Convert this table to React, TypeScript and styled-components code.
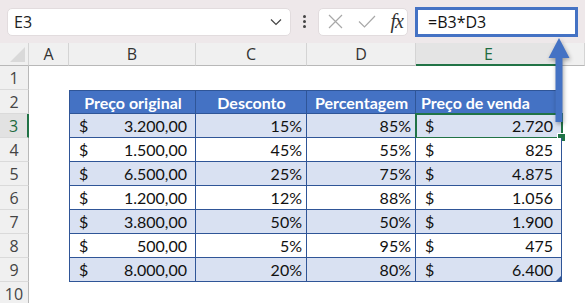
import styled, { createGlobalStyle } from "styled-components";

const GlobalStyle = createGlobalStyle`
  html, body {
    margin: 0;
    padding: 0;
    background: #ffffff;
    overflow: hidden;
  }
  * { box-sizing: border-box; }
`;

const Page = styled.div`
  width: 585px;
  height: 303px;
  position: relative;
  overflow: hidden;
  font-family: "Open Sans", "Noto Sans", sans-serif;
`;

const TopBar = styled.div`
  height: 43px;
  background: #eee8ea;
  display: flex;
  align-items: center;
  padding: 0 7px;
`;

const NameBox = styled.div`
  width: 284px;
  height: 28px;
  background: #fff;
  border: 1px solid #e2dcde;
  border-radius: 5px;
  display: flex;
  align-items: center;
  justify-content: space-between;
  padding: 0 8px 0 6px;
  font-size: 16px;
  color: #222;
`;

const Dots = styled.div`
  width: 27px;
  display: flex;
  flex-direction: column;
  align-items: center;
  gap: 2px;

  span {
    width: 3px;
    height: 3px;
    background: #444;
    border-radius: 50%;
  }
`;

const FxButtons = styled.div`
  width: 90px;
  height: 28px;
  background: #fff;
  border: 1px solid #e2dcde;
  border-radius: 5px;
  display: flex;
  align-items: center;
  justify-content: space-between;
  padding: 0 4px 0 9px;
`;

const Fx = styled.span`
  font-family: "Liberation Serif", serif;
  font-style: italic;
  font-size: 20px;
  color: #333;
  letter-spacing: -1px;
`;

const FormulaInput = styled.div`
  flex: 1;
  margin-left: 7px;
  height: 30px;
  border: 3px solid #4472c4;
  background: #fff;
  display: flex;
  align-items: center;
  padding-left: 10px;
  font-size: 16px;
  color: #111;
`;

const Sheet = styled.div`
  display: grid;
  grid-template-columns: 29px 40px 127px 111px 109px 146px 1fr;
  grid-template-rows: 23px repeat(10, 24px);
`;

const Corner = styled.div`
  background: #f0f0f0;
  border-bottom: 1px solid #b8b8b8;
  border-right: 1px solid #d4d4d4;
  position: relative;

  &::after {
    content: "";
    position: absolute;
    right: 3px;
    bottom: 3px;
    border-style: solid;
    border-width: 0 0 15px 15px;
    border-color: transparent transparent #d9d9d9 transparent;
  }
`;

const ColHead = styled.div<{ $active?: boolean }>`
  background: ${(p) => (p.$active ? "#e4e4e4" : "#f0f0f0")};
  border-right: 1px solid #d4d4d4;
  border-bottom: ${(p) => (p.$active ? "2px solid #217346" : "1px solid #b8b8b8")};
  display: flex;
  align-items: center;
  justify-content: center;
  font-size: 16px;
  color: ${(p) => (p.$active ? "#1e6b3f" : "#333")};
`;

const RowHead = styled.div<{ $active?: boolean }>`
  background: ${(p) => (p.$active ? "#e2e2e2" : "#f0f0f0")};
  border-right: ${(p) => (p.$active ? "2px solid #217346" : "1px solid #b8b8b8")};
  border-bottom: 1px solid #dadada;
  display: flex;
  align-items: center;
  justify-content: center;
  font-size: 16px;
  color: ${(p) => (p.$active ? "#1e6b3f" : "#444")};
`;

const Blank = styled.div`
  background: #fff;
`;

const Cell = styled.div<{
  $head?: boolean;
  $band?: boolean;
  $first?: boolean;
  $align?: "left" | "center" | "right" | "split";
  $selected?: boolean;
  $corner?: boolean;
}>`
  position: relative;
  font-family: "Lato", "Open Sans", sans-serif;
  font-size: 16px;
  font-weight: ${(p) => (p.$head ? 700 : 400)};
  color: ${(p) => (p.$head ? "#fff" : "#111")};
  background: ${(p) => (p.$head ? "#4472c4" : p.$band ? "#d9e1f2" : "#fff")};
  border-right: 1px solid #2f5597;
  border-bottom: 1px solid #2f5597;
  border-left: ${(p) => (p.$first ? "1px solid #2f5597" : "none")};
  border-top: ${(p) => (p.$head ? "1px solid #2f5597" : "none")};
  display: flex;
  align-items: center;
  white-space: nowrap;
  padding: ${(p) => (p.$align === "split" ? "0 8px 0 9px" : "0 4px 0 5px")};
  justify-content: ${(p) =>
    p.$align === "center"
      ? "center"
      : p.$align === "right"
      ? "flex-end"
      : p.$align === "split"
      ? "space-between"
      : "flex-start"};

  ${(p) =>
    p.$selected &&
    `
    &::before {
      content: "";
      position: absolute;
      left: -1px;
      top: -1px;
      right: -2px;
      bottom: -2px;
      border: 2px solid #217346;
    }
    &::after {
      content: "";
      position: absolute;
      right: -5px;
      bottom: -5px;
      width: 7px;
      height: 7px;
      background: #217346;
      border: 1px solid #fff;
    }
  `}

  ${(p) =>
    p.$corner &&
    `
    &::after {
      content: "";
      position: absolute;
      right: 0;
      bottom: 0;
      border-style: solid;
      border-width: 0 0 5px 5px;
      border-color: transparent transparent #2f5597 transparent;
    }
  `}
`;

const Arrow = styled.svg`
  position: absolute;
  left: 540px;
  top: 32px;
  width: 40px;
  height: 96px;
  filter: drop-shadow(1px 2px 2px rgba(0, 0, 0, 0.35));
`;

const rows = [
  ["3.200,00", "15%", "85%", "2.720"],
  ["1.500,00", "45%", "55%", "825"],
  ["6.500,00", "25%", "75%", "4.875"],
  ["1.200,00", "12%", "88%", "1.056"],
  ["3.800,00", "50%", "50%", "1.900"],
  ["500,00", "5%", "95%", "475"],
  ["8.000,00", "20%", "80%", "6.400"],
];

const cols = ["A", "B", "C", "D", "E", ""];

function App() {
  return (
    <Page>
      <GlobalStyle />
      <TopBar>
        <NameBox>
          <span>E3</span>
          <svg width="12" height="8" viewBox="0 0 12 8">
            <path d="M1 1.5 L6 6.5 L11 1.5" fill="none" stroke="#444" strokeWidth="1.2" />
          </svg>
        </NameBox>
        <Dots>
          <span />
          <span />
          <span />
        </Dots>
        <FxButtons>
          <svg width="15" height="15" viewBox="0 0 15 15">
            <path d="M1 1 L14 14 M14 1 L1 14" stroke="#a8a8a8" strokeWidth="1.2" />
          </svg>
          <svg width="18" height="13" viewBox="0 0 18 13">
            <path d="M1 6.5 L6.5 12 L17 1" fill="none" stroke="#a8a8a8" strokeWidth="1.2" />
          </svg>
          <Fx>fx</Fx>
        </FxButtons>
        <FormulaInput>=B3*D3</FormulaInput>
      </TopBar>

      <Sheet>
        <Corner />
        {cols.map((c, i) => (
          <ColHead key={i} $active={c === "E"}>
            {c}
          </ColHead>
        ))}

        <RowHead>1</RowHead>
        {cols.map((_, i) => (
          <Blank key={i} />
        ))}

        <RowHead>2</RowHead>
        <Blank />
        <Cell $head $first $align="center">Preço original</Cell>
        <Cell $head $align="center">Desconto</Cell>
        <Cell $head $align="center">Percentagem</Cell>
        <Cell $head $align="left">Preço de venda</Cell>
        <Blank />

        {rows.map((r, i) => {
          const band = i % 2 === 0;
          return [
            <RowHead key={`h${i}`} $active={i === 0}>
              {i + 3}
            </RowHead>,
            <Blank key={`a${i}`} />,
            <Cell key={`b${i}`} $first $band={band} $align="split">
              <span>$</span>
              <span>{r[0]}</span>
            </Cell>,
            <Cell key={`c${i}`} $band={band} $align="right">
              {r[1]}
            </Cell>,
            <Cell key={`d${i}`} $band={band} $align="right">
              {r[2]}
            </Cell>,
            <Cell
              key={`e${i}`}
              $band={band}
              $align="split"
              $selected={i === 0}
              $corner={i === rows.length - 1}
            >
              <span>$</span>
              <span>{r[3]}</span>
            </Cell>,
            <Blank key={`f${i}`} />,
          ];
        })}

        <RowHead>10</RowHead>
        {cols.map((_, i) => (
          <Blank key={i} />
        ))}
      </Sheet>

      <Arrow viewBox="0 0 40 96">
        <polygon
          points="19,6 29.5,26 22.5,26 22.5,90 15.5,90 15.5,26 8.5,26"
          fill="#4472c4"
        />
      </Arrow>
    </Page>
  );
}

export default App;
